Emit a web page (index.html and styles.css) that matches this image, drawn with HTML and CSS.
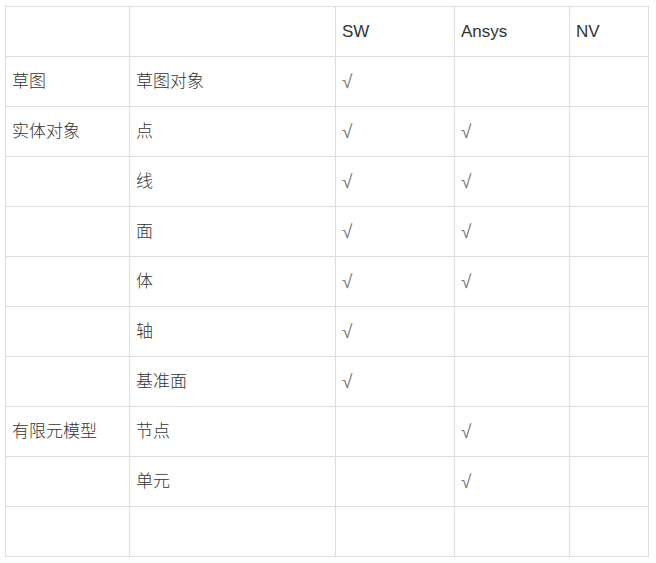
FILE: index.html
```html
<!DOCTYPE html>
<html lang="zh">
<head>
<meta charset="utf-8">
<link rel="stylesheet" href="styles.css">
</head>
<body>
<table class="grid">
  <colgroup>
    <col class="c1"><col class="c2"><col class="c3"><col class="c4"><col class="c5">
  </colgroup>
  <tr><td></td><td></td><td>SW</td><td>Ansys</td><td>NV</td></tr>
  <tr><td>草图</td><td>草图对象</td><td class="ck">√</td><td></td><td></td></tr>
  <tr><td>实体对象</td><td>点</td><td class="ck">√</td><td class="ck">√</td><td></td></tr>
  <tr><td></td><td>线</td><td class="ck">√</td><td class="ck">√</td><td></td></tr>
  <tr><td></td><td>面</td><td class="ck">√</td><td class="ck">√</td><td></td></tr>
  <tr><td></td><td>体</td><td class="ck">√</td><td class="ck">√</td><td></td></tr>
  <tr><td></td><td>轴</td><td class="ck">√</td><td></td><td></td></tr>
  <tr><td></td><td>基准面</td><td class="ck">√</td><td></td><td></td></tr>
  <tr><td>有限元模型</td><td>节点</td><td></td><td class="ck">√</td><td></td></tr>
  <tr><td></td><td>单元</td><td></td><td class="ck">√</td><td></td></tr>
  <tr><td></td><td></td><td></td><td></td><td></td></tr>
</table>
</body>
</html>
```
FILE: styles.css
```css
html, body {
  margin: 0;
  background: #fff;
}
body {
  padding: 6px 0 0 5px;
  font-family: "Liberation Sans", "Noto Sans CJK SC", sans-serif;
  font-size: 17px;
  font-weight: 300;
  color: #333;
}
.grid {
  border-collapse: collapse;
  table-layout: fixed;
  width: 643px;
}
.c1 { width: 124px; }
.c2 { width: 206px; }
.c3 { width: 119px; }
.c4 { width: 115px; }
.c5 { width: 79px; }
.grid td {
  border: 1px solid #ddd;
  height: 49px;
  padding: 0 6px;
  vertical-align: middle;
  line-height: 24px;
}
.ck {
  color: #777;
  font-family: "Liberation Sans", sans-serif;
  font-size: 19px;
}
```
